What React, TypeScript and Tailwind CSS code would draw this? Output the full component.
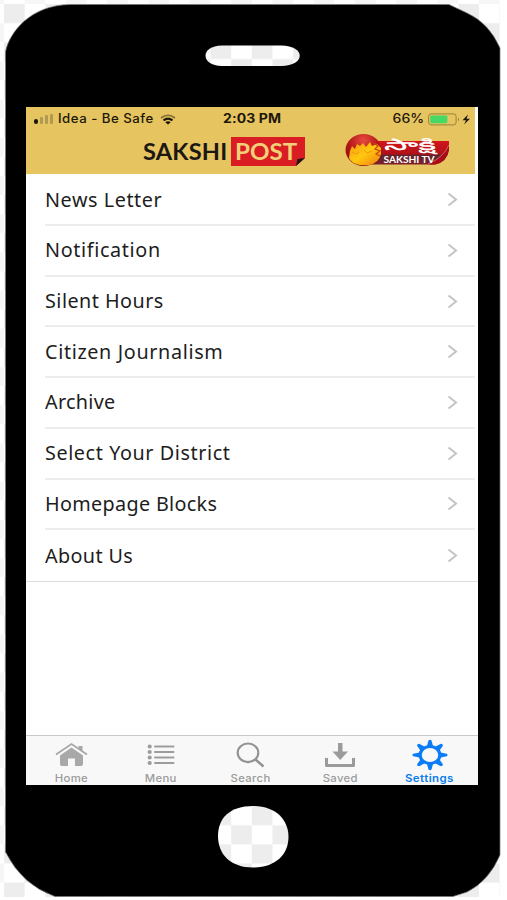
import type { ReactNode } from 'react'

const SETTINGS = [
  { label: 'News Letter', spacing: 'tracking-[0.55px]' },
  { label: 'Notification', spacing: 'tracking-[0.62px]' },
  { label: 'Silent Hours', spacing: 'tracking-[0.45px]' },
  { label: 'Citizen Journalism', spacing: 'tracking-[0.62px]' },
  { label: 'Archive', spacing: 'tracking-[0.3px]' },
  { label: 'Select Your District', spacing: 'tracking-[0.57px]' },
  { label: 'Homepage Blocks', spacing: 'tracking-[0.32px]' },
  { label: 'About Us', spacing: 'tracking-[0.35px]' },
]

function PhoneBody() {
  return (
    <svg className="absolute inset-0" width="507" height="900" viewBox="0 0 507 900" aria-hidden="true">
      <defs>
        <pattern id="checks" x="4" y="4" width="41.3" height="38.2" patternUnits="userSpaceOnUse">
          <rect width="41.3" height="38.2" fill="#fff" />
          <rect width="20.65" height="19.1" fill="#ededed" />
          <rect x="20.65" y="19.1" width="20.65" height="19.1" fill="#ededed" />
        </pattern>
        <pattern id="speaker" href="#checks" x="4" y="1.7" />
      </defs>
      <rect width="500" height="897" fill="url(#checks)" />
      <path d="M0 0H500V4H4V897H0Z" fill="#fff" opacity="0.5" />
      <path
        d="M70 4.5H449L467 13Q489 23 500 48V855Q489 881 467 892L453 896.500H55Q22 885 5.5 852V52C9 33 30 5 70 4.5Z"
        fill="#000"
        stroke="#777"
        strokeWidth="0.7"
      />
      <path d="M222 45.5H281C306 45.5 306 66 281 66H222C200 66 200 45.5 222 45.5Z" fill="url(#speaker)" />
      <path d="M253 806C276 806 288.500 820 288.500 837S276 867.500 253 867.500S218 854 218 836S230 806 253 806Z" fill="url(#checks)" />
    </svg>
  )
}

function Wifi() {
  return (
    <svg width="16" height="11" viewBox="0 0 16 11" fill="none" stroke="#1c1809">
      <path d="M1 4Q8-1.500 15 4" strokeWidth="1.600" opacity="0.5" />
      <path d="M3.500 6.400Q8 2.800 12.500 6.400" strokeWidth="2" />
      <path d="M8 10.500L5.300 8.200Q8 6.200 10.700 8.200Z" fill="#1c1809" stroke="none" />
    </svg>
  )
}

function StatusBar() {
  return (
    <div className="flex h-[23px] items-center pl-[8px] pr-[4px] pt-px text-[12px] text-[#1c1809]">
      <div className="flex h-[10px] items-end gap-[2px]">
        <span className="h-[5px] w-[4px] rounded-sm bg-[#1c1809]" />
        <span className="h-[7px] w-[3px] rounded-[1px] bg-[#b09a50]" />
        <span className="h-[9px] w-[3px] rounded-[1px] bg-[#b09a50]" />
        <span className="h-[10px] w-[3px] rounded-[1px] bg-[#b09a50]" />
      </div>
      <span className="ml-[5px] w-[96px] origin-left scale-x-[1.06] whitespace-nowrap text-[12.5px] font-medium tracking-[0.45px]">Idea - Be Safe</span>
      <span className="ml-[6px]">
        <Wifi />
      </span>
      <span className="ml-[47px] origin-left scale-x-[1.12] whitespace-nowrap text-[12.5px] font-bold tracking-[0.1px]">2:03 PM</span>
      <span className="ml-auto mr-[4px] origin-right scale-x-[1.12] text-[12.5px] font-medium">66%</span>
      <svg width="43" height="13" viewBox="0 0 43 13">
        <rect x="0.600" y="0.900" width="27.500" height="11" rx="2.500" fill="none" stroke="#9a8238" />
        <rect x="2.300" y="2.600" width="17" height="7.600" rx="1" fill="#45d864" />
        <path d="M30 4.500Q32 6.500 30 8.500Z" fill="#9a8238" />
        <path d="M40 1.500L34.500 7.200H38L36 11.500L42 5.800H38.500Z" fill="#1c1809" />
      </svg>
    </div>
  )
}

function TvLogo() {
  return (
    <svg className="overflow-visible" width="107" height="35" viewBox="0 0 107 35">
      <defs>
        <linearGradient id="ribbon" x1="0" y1="0" x2="0" y2="1">
          <stop offset="0" stopColor="#d3151c" />
          <stop offset="0.550" stopColor="#b01018" />
          <stop offset="0.620" stopColor="#5c2530" />
          <stop offset="1" stopColor="#7e2029" />
        </linearGradient>
        <radialGradient id="globe" cx="0.500" cy="0.200" r="0.800">
          <stop offset="0" stopColor="#e64b3d" />
          <stop offset="0.500" stopColor="#b7171a" />
          <stop offset="1" stopColor="#860d12" />
        </radialGradient>
        <linearGradient id="flame" x1="0" y1="0" x2="1" y2="1">
          <stop offset="0" stopColor="#f79b12" />
          <stop offset="0.500" stopColor="#ffc80e" />
          <stop offset="1" stopColor="#f17c11" />
        </linearGradient>
      </defs>
      <path d="M30 8H104V17Q102 29 90 31.500H22Z" fill="url(#ribbon)" />
      <path d="M104 12V17Q102 29 90 31.500H83Q97 25 104 12Z" fill="#a90c16" />
      <path d="M83 31Q98 25 104 12" fill="none" stroke="#e8a0a0" strokeWidth="0.600" />
      <ellipse cx="18.500" cy="17" rx="18" ry="16" fill="url(#globe)" />
      <path d="M4 25L5 18L7 13L10 16L12 11L15 13L18 10L21 14L25 9L27 13L32 11L36 15L36 21Q34 30 24 32Q16 33 11 31Q6 29 4 25Z" fill="url(#flame)" />
      <path d="M29 10L33 13L30 16L35 18L31 21L35 23" fill="none" stroke="#c6480f" strokeWidth="1.200" />
      <path d="M7 19L11 21L14 19M19 17L22 20L27 18" fill="none" stroke="#ef9413" strokeWidth="1" />
      <text
        x="39"
        y="16.500"
        textLength="52"
        lengthAdjust="spacingAndGlyphs"
        fill="#fff"
        fontSize="15.500"
        fontWeight="600"
        fontFamily="'Noto Sans Telugu', 'Noto Sans', sans-serif"
      >
        సాక్షి
      </text>
      <text x="38.500" y="30" textLength="51" lengthAdjust="spacingAndGlyphs" fill="#fff" fontSize="8.500" fontWeight="700" fontFamily="Lato, sans-serif">SAKSHI TV</text>
    </svg>
  )
}

function Header() {
  return (
    <header className="h-[67px] w-[449px] bg-[#e6c460]">
      <StatusBar />
      <div className="flex h-[44px] items-start pl-[117px] pt-[0.600px]">
        <span className="mt-[4px] w-[88px] origin-left scale-x-[1.025] whitespace-nowrap font-[Lato] text-[23px] leading-[32px] font-bold tracking-[0.2px] text-[#1b1814]">SAKSHI</span>
        <div className="relative mt-[6px] h-[29px] w-[74px] bg-[#d91d23] pl-[4px] font-[Lato] text-[22px] leading-[29px] font-bold text-[#f1d078]">
          <span className="block w-[60px] origin-left scale-x-[1.1]">POST</span>
          <svg className="absolute right-0 bottom-0" width="9" height="8" viewBox="0 0 9 8">
            <path d="M0 8L9 0V8Z" fill="#e6c460" />
            <path d="M0 8L1.500 1L9 0Z" fill="#1b1814" />
          </svg>
        </div>
        <div className="ml-[39.500px] mt-[2px]">
          <TvLogo />
        </div>
      </div>
    </header>
  )
}

function Tab({ label, active, children }: { label: string; active?: boolean; children: ReactNode }) {
  return (
    <div className={active ? 'flex w-[89.600px] flex-col items-center text-[#0a7cec]' : 'flex w-[89.600px] flex-col items-center text-[#9b9b9b]'}>
      <div className="flex h-[37px] items-center">{children}</div>
      <span className={active ? 'scale-x-[1.09] text-[10.500px] leading-[12px] font-semibold tracking-[0.4px]' : 'scale-x-[1.08] text-[10.500px] leading-[12px] font-medium tracking-[0.3px]'}>{label}</span>
    </div>
  )
}

function TabBar() {
  return (
    <nav className="flex h-[50px] border-t border-[#c9c9c9] bg-[#f8f8f8]">
      <Tab label="Home">
        <svg width="33" height="25" viewBox="0 0 33 25" fill="#a8a8a8">
          <path d="M1 12.500L16.500 2L32 12.500" fill="none" stroke="#a8a8a8" strokeWidth="1.800" />
          <path d="M23.500 4H27.500V9.500L23.500 6.800Z" />
          <path d="M5 13.500L16.500 5.500L28 13.500V22Q28 24 26 24H20V16.500H13V24H7Q5 24 5 22Z" />
        </svg>
      </Tab>
      <Tab label="Menu">
        <svg width="28" height="22" viewBox="0 0 28 22" fill="#9d9d9d" stroke="#9d9d9d" strokeWidth="2" strokeLinecap="round">
          {[2.5, 8, 13.5, 19].map(y => (
            <g key={y}>
              <circle cx="2.700" cy={y} r="1.100" />
              <path d={`M8 ${y}H26.500`} />
            </g>
          ))}
        </svg>
      </Tab>
      <Tab label="Search">
        <svg width="29" height="26" viewBox="0 0 29 26" fill="none" stroke="#929292">
          <ellipse cx="12" cy="10.800" rx="10.300" ry="9.300" strokeWidth="2.100" />
          <path d="M19.500 17.500L27.500 24.500" strokeWidth="2.500" />
        </svg>
      </Tab>
      <Tab label="Saved">
        <svg width="30" height="26" viewBox="0 0 30 26" fill="#9b9b9b">
          <path d="M13 1H17.500V9.500H23L15.200 18L7.500 9.500H13Z" />
          <path d="M1.500 16V23.500H28.500V16" fill="none" stroke="#9b9b9b" strokeWidth="3" strokeLinejoin="round" />
        </svg>
      </Tab>
      <Tab label="Settings" active>
        <svg width="36" height="32" viewBox="-18 -16 36 32" fill="#0a7cf5">
          <g transform="scale(1.160 1)">
            {[0, 45, 90, 135, 180, 225, 270, 315].map(a => (
              <path key={a} d="M-2.600-9L-1.300-14.500Q0-15.800 1.300-14.500L2.600-9Z" transform={`rotate(${a})`} />
            ))}
            <circle r="8.500" fill="none" stroke="#0a7cf5" strokeWidth="2.800" />
          </g>
        </svg>
      </Tab>
    </nav>
  )
}

export default function App() {
  return (
    <div className="relative h-[900px] w-[507px] overflow-hidden bg-white font-[Inter,sans-serif]">
      <PhoneBody />
      <div className="relative flex flex-col pt-[107.400px] pl-[26.400px]">
        <div className="flex h-[678px] w-[452px] flex-col bg-white">
          <Header />
          <ul className="flex flex-col border-b border-[#dcdcdc] pt-px font-[Noto_Sans,sans-serif]">
            {SETTINGS.map((s, i) => (
              <li key={s.label} className="flex h-[50.700px] pl-[18.600px]">
                <div className={i < SETTINGS.length - 1 ? 'flex w-[430px] items-center justify-between border-b-2 border-[#ececec] pr-[17px]' : 'flex w-[430px] items-center justify-between pr-[17px]'}>
                  <span className={`origin-left scale-x-[1.04] whitespace-nowrap pt-px text-[19px] leading-none text-[#1d1d1d] ${s.spacing}`}>{s.label}</span>
                  <svg width="11" height="15" viewBox="0 0 11 15" fill="none" stroke="#c4c4c6" strokeWidth="2">
                    <path d="M1.500 1.500L9 7.500L1.500 13.500" />
                  </svg>
                </div>
              </li>
            ))}
          </ul>
          <div className="flex-1" />
          <TabBar />
        </div>
      </div>
    </div>
  )
}
